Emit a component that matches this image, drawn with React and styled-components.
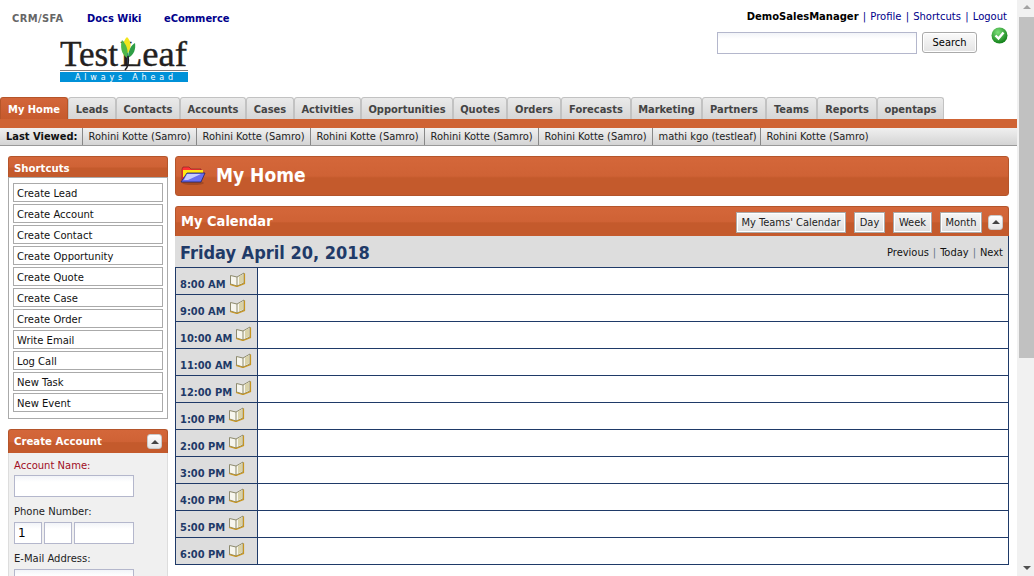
import React from "react";
import styled, { createGlobalStyle } from "styled-components";

const tabs = ["My Home", "Leads", "Contacts", "Accounts", "Cases", "Activities", "Opportunities", "Quotes", "Orders", "Forecasts", "Marketing", "Partners", "Teams", "Reports", "opentaps"];
const tabWidths = [68, 48, 64, 66, 48, 67, 92, 54, 54, 70, 71, 64, 51, 60, 67];
const recent = [
  { name: "Rohini Kotte (Samro)", w: 114 },
  { name: "Rohini Kotte (Samro)", w: 114 },
  { name: "Rohini Kotte (Samro)", w: 114 },
  { name: "Rohini Kotte (Samro)", w: 114 },
  { name: "Rohini Kotte (Samro)", w: 114 },
  { name: "mathi kgo (testleaf)", w: 108 },
  { name: "Rohini Kotte (Samro)", w: 114 },
];
const shortcuts = ["Create Lead", "Create Account", "Create Contact", "Create Opportunity", "Create Quote", "Create Case", "Create Order", "Write Email", "Log Call", "New Task", "New Event"];
const hours = ["8:00 AM", "9:00 AM", "10:00 AM", "11:00 AM", "12:00 PM", "1:00 PM", "2:00 PM", "3:00 PM", "4:00 PM", "5:00 PM", "6:00 PM"];

const condensed = `"DejaVu Sans Condensed", "DejaVu Sans", sans-serif`;

const Global = createGlobalStyle`
  html, body { margin: 0; height: 100%; overflow: hidden; background: #fff; }
  body { font-family: "DejaVu Sans", Verdana, sans-serif; font-size: 10px; color: #000; }
  * { box-sizing: border-box; }
`;

const Shell = styled.div`
  display: flex;
  height: 576px;
  overflow: hidden;
`;

const Page = styled.div`
  width: 1017px;
  flex: none;
`;

const Scrollbar = styled.div`
  width: 17px;
  flex: none;
  background: #f1f1f1;
  display: flex;
  flex-direction: column;
  align-items: center;
  padding-top: 5px;
`;

const Arrow = styled.div`
  width: 0;
  height: 0;
  margin-left: 2px;
  border-left: 4px solid transparent;
  border-right: 4px solid transparent;
  ${(p) => (p.down ? "border-top: 4px solid #505050;" : "border-bottom: 4px solid #a3a3a3;")}
`;

const Thumb = styled.div`
  width: 15px;
  height: 341px;
  margin: 8px 0 0 2px;
  background: #c1c1c1;
  flex: none;
`;

const ScrollSpacer = styled.div`
  flex: 1;
`;

const DownArrow = styled(Arrow)`
  margin-bottom: 6px;
`;

const Header = styled.header`
  display: flex;
  justify-content: space-between;
  height: 97px;
`;

const Brand = styled.div`
  padding: 12px 0 0 12px;
`;

const AppLinks = styled.nav`
  display: flex;
  height: 14px;
  font-family: ${condensed};
  font-size: 11px;
  font-weight: bold;
  line-height: 14px;
`;

const AppLink = styled.a`
  color: ${(p) => (p.current ? "#666" : "#00008b")};
  letter-spacing: ${(p) => (p.current ? "0.4px" : "0")};
  width: ${(p) => p.w}px;
  white-space: nowrap;
`;

const LogoBox = styled.div`
  margin: 4px 0 0 48px;
  width: 128px;
`;

const UserArea = styled.div`
  padding: 10px 10px 0 0;
  display: flex;
  flex-direction: column;
  align-items: flex-end;
`;

const UserLine = styled.div`
  font-size: 10px;
  line-height: 14px;
  white-space: nowrap;
  color: #000;
  a { color: #00008b; }
  i { font-style: normal; color: #00008b; margin: 0 4.2px; }
`;

const SearchRow = styled.div`
  display: flex;
  align-items: flex-start;
  margin-top: 8px;
`;

const SearchBox = styled.input`
  width: 200px;
  height: 22px;
  border: 1px solid #b4b7cc;
  background: linear-gradient(#f2f4f8, #fff 6px);
  margin-right: 5px;
`;

const SearchButton = styled.button`
  width: 55px;
  height: 21px;
  margin: 0 14px 0 0;
  padding: 0;
  font: 11px ${condensed};
  color: #000;
  border: 1px solid #aaa;
  border-radius: 3px;
  background: linear-gradient(#fafafa, #e4e4e4);
  box-shadow: inset 0 0 0 1px #fff;
`;

const StatusIcon = styled.svg`
  width: 17px;
  height: 17px;
  margin: -5px -1px 0 0;
  flex: none;
`;

const TabBar = styled.div`
  display: flex;
  height: 22px;
`;

const Tab = styled.div`
  width: ${(p) => p.w}px;
  flex: none;
  height: 22px;
  border: 1px solid ${(p) => (p.active ? "#b5552a" : "#c2c2c2")};
  border-bottom: none;
  border-radius: 3px 3px 0 0;
  background: ${(p) => (p.active ? "linear-gradient(#d3663a, #c65a2d)" : "linear-gradient(#eaeaea, #d6d6d6)")};
  color: ${(p) => (p.active ? "#fff" : "#444")};
  font-family: ${condensed};
  font-size: 11px;
  font-weight: bold;
  line-height: 23px;
  text-align: center;
  white-space: nowrap;
`;

const OrangeRule = styled.div`
  height: 9px;
  background: #cf6334;
`;

const Recent = styled.div`
  display: flex;
  height: 18px;
  background: linear-gradient(#f0f0f0, #d4d4d4);
  border-bottom: 1px solid #999;
  line-height: 18px;
  font-family: ${condensed};
  font-size: 11px;
  color: #222;
  white-space: nowrap;
`;

const RecentLabel = styled.b`
  width: 83px;
  padding-left: 6px;
  color: #111;
  border-right: 1px solid #888;
`;

const RecentItem = styled.span`
  width: ${(p) => p.w}px;
  padding-left: 5.5px;
  border-right: 1px solid #888;
  &:last-child { border-right: none; }
`;

const Columns = styled.div`
  display: flex;
  padding: 10px 8px 0;
  gap: 7px;
`;

const Side = styled.aside`
  width: 160px;
  flex: none;
`;

const Content = styled.main`
  width: 834px;
  flex: none;
`;

const orange = `
  background: linear-gradient(#d4673a 0, #cf6235 50%, #c45a2c 55%, #c45a2c 100%);
  border: 1px solid #b4552b;
  border-bottom: none;
  border-radius: 3px 3px 0 0;
  color: #fff;
  font-weight: bold;
`;

const SideHead = styled.div`
  ${orange}
  height: ${(p) => p.h}px;
  display: flex;
  align-items: center;
  justify-content: space-between;
  padding: ${(p) => (p.h === 21 ? "2px" : "0")} 5px 0;
  font-family: ${condensed};
  font-size: 11.3px;
`;

const ShortcutBox = styled.div`
  border: 1px solid #aaa;
  padding: 5px 4px 6px;
  display: flex;
  flex-direction: column;
  gap: 2px;
`;

const Shortcut = styled.a`
  height: 19px;
  border: 1px solid #aaa;
  padding-left: 3px;
  font-size: 10px;
  line-height: 19px;
  color: #111;
  white-space: nowrap;
`;

const FormPanel = styled.section`
  margin-top: 10px;
`;

const FormBody = styled.div`
  background: #f0f0f0;
  border: 1px solid #ddd;
  border-top: none;
  padding: 7px 5px;
  height: 130px;
  overflow: hidden;
`;

const Label = styled.div`
  font-size: 10px;
  line-height: 12px;
  color: ${(p) => (p.required ? "#a00d1f" : "#222")};
  margin: ${(p) => (p.first ? 0 : 9)}px 0 ${(p) => (p.first ? 3 : 4)}px;
`;

const Field = styled.input`
  display: block;
  width: ${(p) => p.w}px;
  height: 22px;
  padding: 0 3px;
  border: 1px solid #b4b7cc;
  background: linear-gradient(#f2f4f8, #fff 6px);
  font: 12px "DejaVu Sans", sans-serif;
  color: #000;
`;

const PhoneRow = styled.div`
  display: flex;
  gap: 2px;
`;

const TitleBar = styled.div`
  ${orange}
  border: 1px solid #b4552b;
  border-radius: 3px;
  height: 40px;
  display: flex;
  align-items: center;
  gap: 10px;
  padding: 0 0 2px 4px;
  font-size: 19px;
  font-family: ${condensed};
`;

const Calendar = styled.section`
  margin-top: 10px;
`;

const CalHead = styled.div`
  ${orange}
  height: 30px;
  display: flex;
  align-items: center;
  justify-content: space-between;
  padding: 1px 5px 0 5px;
  font-family: ${condensed};
  font-size: 14.5px;
`;

const CalTitle = styled.span`
  margin-top: -3px;
`;

const CalTools = styled.div`
  display: flex;
  align-items: center;
  gap: 8px;
`;

const CalButton = styled.button`
  height: 21px;
  width: ${(p) => p.w}px;
  padding: 0;
  border: 1px solid #aaa;
  background: linear-gradient(#f6f6f6, #dedede);
  box-shadow: inset 0 0 0 1px #fff;
  color: #222;
  font: 11px ${condensed};
`;

const Toggle = styled.span`
  width: 15px;
  height: 15px;
  border-radius: 3px;
  background: linear-gradient(#fff, #e6e6e6);
  border: 1px solid #c9c9c9;
  display: flex;
  align-items: center;
  justify-content: center;
  flex: none;
`;

const CalToggle = styled(Toggle)`
  margin-left: -2px;
`;

const ToggleArrow = styled.i`
  width: 0;
  height: 0;
  border-left: 4px solid transparent;
  border-right: 4px solid transparent;
  border-bottom: 4px solid #444;
`;

const DateBar = styled.div`
  height: 31px;
  background: #ddd;
  display: flex;
  align-items: center;
  justify-content: space-between;
  padding: 2px 5px 0;
  border-right: 1px solid #1f3a68;
`;

const DateTitle = styled.h2`
  margin: 0;
  font-family: ${condensed};
  font-size: 18px;
  font-weight: bold;
  color: #1f3a68;
`;

const DateNav = styled.div`
  font: 11px ${condensed};
  color: #111;
  i { font-style: normal; color: #678; margin: 0 4px; }
`;

const Grid = styled.div`
  border: 1px solid #1f3a68;
  border-width: 1px 1px 0;
`;

const Row = styled.div`
  display: flex;
  height: 27px;
  border-bottom: 1px solid #1f3a68;
`;

const TimeCell = styled.div`
  width: 82px;
  flex: none;
  background: #ddd;
  border-right: 1px solid #1f3a68;
  padding: 0 0 0 4px;
  display: flex;
  align-items: center;
  gap: 3px;
  color: #1f3a68;
  font-family: ${condensed};
  font-size: 11px;
  font-weight: bold;
  white-space: nowrap;
`;

const TimeText = styled.span`
  margin-top: 7px;
`;

const BookSvg = styled.svg`
  width: 17px;
  height: 15px;
  flex: none;
  margin-top: -4px;
`;

const Book = () => (
  <BookSvg viewBox="0 0 17 15">
    <path d="M1.5 3.5 L8 5 L15 1 L15 11 L8 14 L1.5 12 Z" fill="#f7f6ee" stroke="#8d8a6d" strokeWidth="1" />
    <path d="M8 5 V14" stroke="#8d8a6d" />
    <path d="M10 4.5 L14 2.2 V10.5 L10 12.3 Z" fill="#d9d2a8" />
    <path d="M15.5 1.5 V11.5 L8 14.5 L1 12.5" fill="none" stroke="#c7951f" strokeWidth="1.2" />
  </BookSvg>
);

const Folder = () => (
  <svg width="26" height="22" viewBox="0 0 26 22">
    <ellipse cx="13" cy="19" rx="11" ry="2" fill="#8a3d1e" opacity="0.6" />
    <path d="M2 5 L3 3 H9 L11 5 H21 V16 H2 Z" fill="#f33" stroke="#612" strokeWidth="0.5" />
    <path d="M3 6 H23 V13 H3 Z" fill="#ffe814" />
    <path d="M7 9 H25 L21 18 H1 Z" fill="#6a6ff0" stroke="#226" strokeWidth="0.8" />
    <path d="M7 10 H21 L8 16 H4 Z" fill="#c9ccff" />
  </svg>
);

const Logo = () => (
  <svg width="128" height="52" viewBox="0 -6 128 52">
    <text x="0" y="30" fontFamily="Liberation Serif, serif" fontSize="36" fill="#231f20" stroke="#231f20" strokeWidth="0.4" textLength="58" lengthAdjust="spacingAndGlyphs">Test</text>
    <text x="60" y="30" fontFamily="Liberation Serif, serif" fontSize="36" fill="#231f20" stroke="#231f20" strokeWidth="0.4" textLength="67" lengthAdjust="spacingAndGlyphs">Leaf</text>
    <path d="M66 17 C62 11 63 5 67 1 C71 5 72 11 68 17 Z" fill="#f2e51d" />
    <path d="M67 22 C61 18 60 10 62 4 C66 8 69 14 67 22 Z" fill="#4fb848" />
    <path d="M68 22 C68 15 71 9 75 7 C76 13 74 19 68 22 Z" fill="#2e9e45" />
    <path d="M68 20 C69 26 68 31 65 34" fill="none" stroke="#231f20" strokeWidth="1.6" />
    <path d="M0 34.5 H128" stroke="#231f20" strokeWidth="0.6" />
    <rect x="0" y="36" width="128" height="10" fill="#0091d8" />
    <text x="15" y="44" fontFamily="DejaVu Sans, sans-serif" fontSize="8" fill="#fff" textLength="98">Always Ahead</text>
  </svg>
);

function TimeRow({ label }) {
  return (
    <Row>
      <TimeCell>
        <TimeText>{label}</TimeText>
        <Book />
      </TimeCell>
    </Row>
  );
}

export default function App() {
  return (
    <Shell>
      <Global />
      <Page>
        <Header>
          <Brand>
            <AppLinks>
              <AppLink current w={75}>CRM/SFA</AppLink>
              <AppLink w={77}>Docs Wiki</AppLink>
              <AppLink w={80}>eCommerce</AppLink>
            </AppLinks>
            <LogoBox><Logo /></LogoBox>
          </Brand>
          <UserArea>
            <UserLine>
              <b>DemoSalesManager</b><i>|</i><a>Profile</a><i>|</i><a>Shortcuts</a><i>|</i><a>Logout</a>
            </UserLine>
            <SearchRow>
              <SearchBox />
              <SearchButton>Search</SearchButton>
              <StatusIcon viewBox="0 0 17 17">
                <defs>
                  <radialGradient id="ok" cx="40%" cy="30%" r="75%">
                    <stop offset="0" stopColor="#7de07a" />
                    <stop offset="1" stopColor="#0b7a12" />
                  </radialGradient>
                </defs>
                <circle cx="8.5" cy="8.5" r="8" fill="url(#ok)" />
                <path d="M4.5 8.5 L7.5 11.5 L12.5 5.5" fill="none" stroke="#fff" strokeWidth="2.4" />
              </StatusIcon>
            </SearchRow>
          </UserArea>
        </Header>
        <TabBar>
          {tabs.map((t, i) => (
            <Tab key={t} w={tabWidths[i]} active={i === 0}>{t}</Tab>
          ))}
        </TabBar>
        <OrangeRule />
        <Recent>
          <RecentLabel>Last Viewed:</RecentLabel>
          {recent.map((r, i) => <RecentItem key={i} w={r.w}>{r.name}</RecentItem>)}
        </Recent>
        <Columns>
          <Side>
            <SideHead h={21}>Shortcuts</SideHead>
            <ShortcutBox>
              {shortcuts.map((s) => <Shortcut key={s}>{s}</Shortcut>)}
            </ShortcutBox>
            <FormPanel>
              <SideHead h={24}>Create Account<Toggle><ToggleArrow /></Toggle></SideHead>
              <FormBody>
                <Label first required>Account Name:</Label>
                <Field w={120} />
                <Label>Phone Number:</Label>
                <PhoneRow>
                  <Field w={28} defaultValue="1" />
                  <Field w={28} />
                  <Field w={60} />
                </PhoneRow>
                <Label>E-Mail Address:</Label>
                <Field w={120} />
              </FormBody>
            </FormPanel>
          </Side>
          <Content>
            <TitleBar><Folder />My Home</TitleBar>
            <Calendar>
              <CalHead>
                <CalTitle>My Calendar</CalTitle>
                <CalTools>
                  <CalButton w={110}>My Teams' Calendar</CalButton>
                  <CalButton w={31}>Day</CalButton>
                  <CalButton w={39}>Week</CalButton>
                  <CalButton w={42}>Month</CalButton>
                  <CalToggle><ToggleArrow /></CalToggle>
                </CalTools>
              </CalHead>
              <DateBar>
                <DateTitle>Friday April 20, 2018</DateTitle>
                <DateNav>Previous<i>|</i>Today<i>|</i>Next</DateNav>
              </DateBar>
              <Grid>
                {hours.map((h) => <TimeRow key={h} label={h} />)}
              </Grid>
            </Calendar>
          </Content>
        </Columns>
      </Page>
      <Scrollbar>
        <Arrow />
        <Thumb />
        <ScrollSpacer />
        <DownArrow down />
      </Scrollbar>
    </Shell>
  );
}
